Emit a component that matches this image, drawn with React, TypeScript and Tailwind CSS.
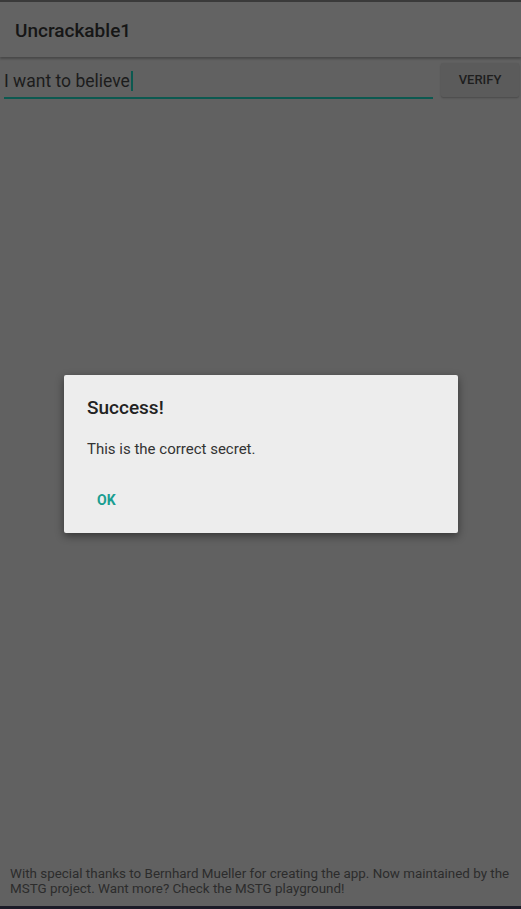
export default function App() {
  return (
    <div className="relative flex h-[909px] w-[521px] flex-col overflow-hidden bg-[#616161] font-['Roboto',sans-serif]">
      {/* status strip */}
      <div className="h-[2px] bg-[#3a3a3a]" />

      {/* action bar */}
      <div className="flex h-[55px] items-center bg-[#636363] px-[15px] pt-[4px] shadow-[0_2px_2px_rgba(0,0,0,0.25)]">
        <h1 className="text-[19px] font-medium text-[#161616]">Uncrackable1</h1>
      </div>

      {/* input row */}
      <div className="flex items-start pl-1 pr-[2px] pt-[6px]">
        <div className="mr-[8px] mt-[2px] flex h-[34px] flex-1 items-center border-b-2 border-[#0c5950]">
          <span className="text-[17.5px] text-[#1c1c1c]">I want to believe</span>
          <span className="ml-px h-[20px] w-[2px] bg-[#0c5950]" />
        </div>
        <button className="h-[34px] w-[78px] rounded-[2px] bg-[#5b5b5b] text-[13px] font-medium text-[#1e1e1e] shadow-[0_1px_2px_rgba(0,0,0,0.25)]">
          VERIFY
        </button>
      </div>

      <div className="flex-1" />

      {/* footer */}
      <p className="pb-[10px] pl-[10px] pr-[4px] text-[13.4px] leading-[15px] text-[#2c2c2c]">
        With special thanks to Bernhard Mueller for creating the app. Now maintained by the MSTG project. Want more? Check the MSTG playground!
      </p>
      <div className="h-[3px] bg-[#1b1b27]" />

      {/* dialog */}
      <div className="absolute left-[64px] top-[375px] flex h-[158px] w-[394px] flex-col rounded-[2px] bg-[#ededed] px-[23px] shadow-[0_3px_8px_rgba(0,0,0,0.45)]">
        <h2 className="mt-[21px] text-[19px] font-medium leading-[24px] text-[#222]">Success!</h2>
        <p className="mt-[19px] text-[15px] leading-[20px] text-[#333]">This is the correct secret.</p>
        <button className="mt-[31px] w-fit px-[10px] text-[14px] font-bold text-[#1a9e91]">OK</button>
      </div>
    </div>
  );
}
